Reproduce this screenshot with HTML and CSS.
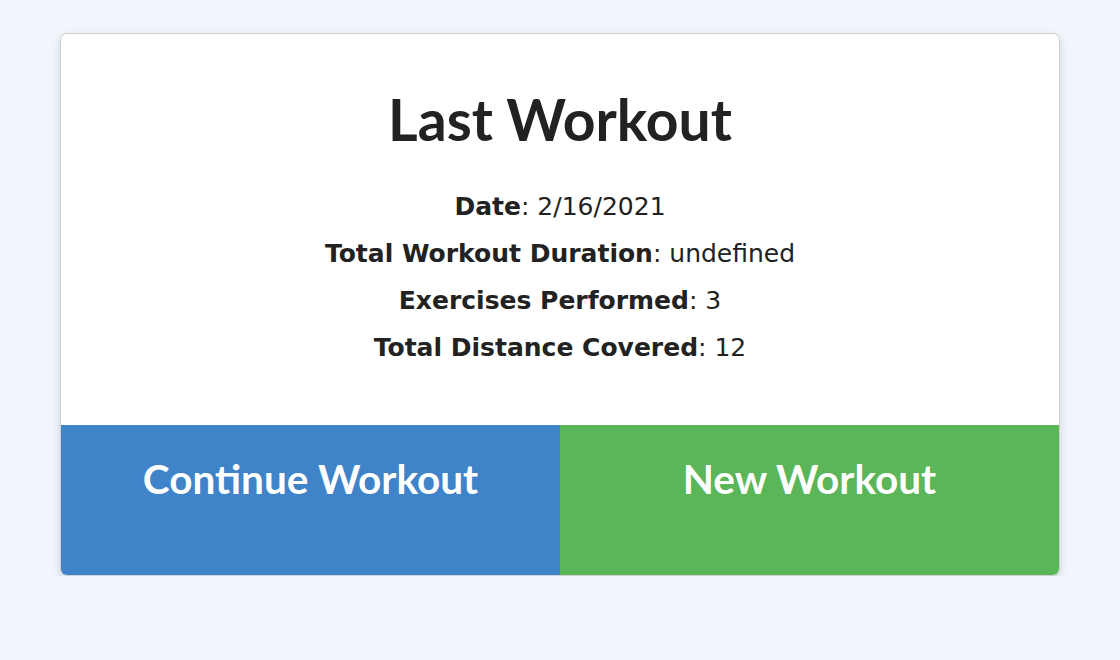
FILE: index.html
```html
<!DOCTYPE html>
<html>
<head>
<meta charset="utf-8">
<link rel="stylesheet" href="styles.css">
</head>
<body>
<div class="card">
  <div class="card-body">
    <h1 class="title">Last Workout</h1>
    <div class="stats">
      <p class="stat"><strong>Date</strong>: 2/16/2021</p>
      <p class="stat"><strong>Total Workout Duration</strong>: undefined</p>
      <p class="stat"><strong>Exercises Performed</strong>: 3</p>
      <p class="stat"><strong>Total Distance Covered</strong>: 12</p>
    </div>
  </div>
  <div class="actions">
    <a class="btn btn-continue">Continue Workout</a>
    <a class="btn btn-new">New Workout</a>
  </div>
</div>
</body>
</html>
```

FILE: styles.css
```css
html, body {
  margin: 0;
  padding: 0;
}
body {
  background: #f1f6fd;
  font-family: "DejaVu Sans", Verdana, sans-serif;
  color: #222;
  padding: 33px 60px 0;
}
.card {
  background: #fff;
  border: 1px solid #d0d0d0;
  border-radius: 7px;
  box-shadow: 0 3px 8px rgba(0, 0, 0, 0.14);
  overflow: hidden;
  height: 541px;
  display: flex;
  flex-direction: column;
}
.card-body {
  flex: 1;
  text-align: center;
  padding-top: 56px;
}
.title {
  font-family: Lato, sans-serif;
  font-weight: 700;
  font-size: 57px;
  line-height: 58px;
  margin: 0 0 35px;
  color: #222;
}
.stat {
  margin: 0;
  font-size: 25px;
  line-height: 47px;
}
.stat strong {
  font-weight: 700;
}
.actions {
  display: flex;
  height: 150px;
}
.btn {
  flex: 1;
  font-family: Lato, sans-serif;
  font-weight: 700;
  font-size: 40.5px;
  color: #fff;
  text-align: center;
  padding-top: 30px;
  line-height: 48px;
}
.btn-continue {
  background: #3f83c9;
}
.btn-new {
  background: #5ab658;
}
```
